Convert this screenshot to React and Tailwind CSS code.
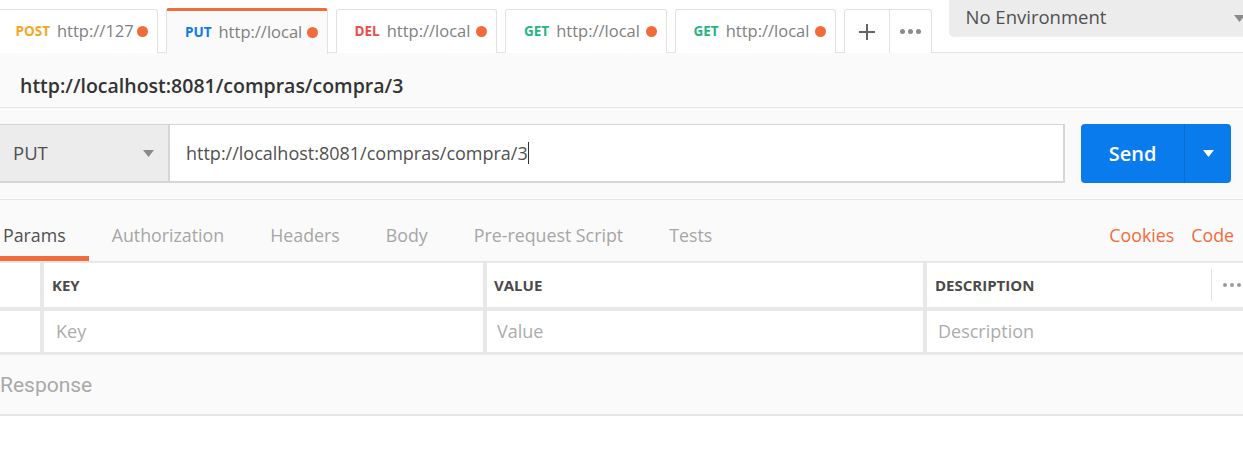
import React from 'react';

const tabs = [
  { method: 'POST', color: 'text-[#f5a623]', url: 'http://127' },
  { method: 'PUT', color: 'text-[#097bed]', url: 'http://local', active: true },
  { method: 'DEL', color: 'text-[#ed4b48]', url: 'http://local' },
  { method: 'GET', color: 'text-[#26b47f]', url: 'http://local' },
  { method: 'GET', color: 'text-[#26b47f]', url: 'http://local' },
];

const Caret = ({ className }) => (
  <svg width="11" height="7" viewBox="0 0 11 7" className={className}>
    <path d="M0 0 L11 0 L5.5 7 Z" fill="currentColor" />
  </svg>
);

const RequestTab = ({ tab }) => (
  <div
    className={
      'w-[161.5px] shrink-0 flex items-center pl-[18px] pr-[9px] border-x border-[#e2e2e2] rounded-t-[3px] ' +
      (tab.active
        ? 'h-[46px] bg-[#fafafa] border-t-[3px] border-t-[#f26b3a] relative top-px'
        : 'h-[44px] bg-white border-t')
    }
  >
    <span className={'text-[13.5px] font-bold shrink-0 ' + tab.color}>{tab.method}</span>
    <span className="ml-[7px] text-[16.5px] text-[#808080] whitespace-nowrap overflow-hidden flex-1">{tab.url}</span>
    <span className="w-[11px] h-[11px] rounded-full bg-[#f26b3a] shrink-0 ml-[3px]" />
  </div>
);

const App = () => {
  return (
    <div className="w-[1243px] h-[475px] overflow-hidden bg-white text-[#505050]" style={{ fontFamily: '"Open Sans", sans-serif' }}>
      {/* tab strip */}
      <div className="h-[53px] flex items-start bg-white border-b border-[#e4e4e4]">
        <div className="flex items-end gap-[8px] h-[53px] ml-[-3.5px]">
          {tabs.map((t, i) => (
            <RequestTab key={i} tab={t} />
          ))}
          <div className="w-[88px] h-[44px] flex border-x border-t border-[#e2e2e2] rounded-t-[3px] bg-white">
            <div className="w-[45px] flex items-center justify-center border-r border-[#e2e2e2] text-[#666]">
              <svg width="18" height="18" viewBox="0 0 18 18">
                <path d="M9 1 V17 M1 9 H17" stroke="currentColor" strokeWidth="2" />
              </svg>
            </div>
            <div className="flex-1 flex items-center justify-center gap-[3px]">
              <span className="w-[5px] h-[5px] rounded-full bg-[#8a8a8a]" />
              <span className="w-[5px] h-[5px] rounded-full bg-[#8a8a8a]" />
              <span className="w-[5px] h-[5px] rounded-full bg-[#8a8a8a]" />
            </div>
          </div>
        </div>
        <div className="ml-[16.5px] w-[310px] h-[37px] bg-[#ececec] rounded-bl-[5px] flex items-center pl-[17px] pb-[4px] shrink-0">
          <span className="text-[18.5px] text-[#505050]">No Environment</span>
          <Caret className="ml-[128px] mt-[4px] text-[#8a8a8a]" />
        </div>
      </div>

      <div className="bg-[#fafafa]">
        {/* title */}
        <div className="h-[55px] pl-[20px] pt-[21px] border-b border-[#e6e6e6]">
          <div className="text-[19.5px] leading-[24px] font-semibold text-[#333]">http://localhost:8081/compras/compra/3</div>
        </div>

        {/* url row */}
        <div className="flex pt-[16px] pb-[16px] border-b border-[#e6e6e6]">
          <div className="w-[170px] h-[59px] bg-[#ececec] border-t border-b-2 border-r-2 border-[#d6d6d6] flex items-center pl-[13px] pr-[14px] justify-between">
            <span className="text-[18.5px] text-[#505050]">PUT</span>
            <Caret className="text-[#8a8a8a]" />
          </div>
          <div className="w-[895px] h-[59px] bg-white border-t border-b-2 border-r-2 border-[#d6d6d6] flex items-center pl-[16px]">
            <span className="text-[18px] text-[#505050]">http://localhost:8081/compras/compra/3</span>
            <span className="w-px h-[22px] bg-[#333]" />
          </div>
          <div className="ml-[16px] w-[150px] h-[59px] bg-[#097bed] rounded-[4px] flex text-white">
            <div className="w-[104px] flex items-center justify-center border-r border-[#0a6cd2]">
              <span className="text-[20px] font-semibold">Send</span>
            </div>
            <div className="flex-1 flex items-center justify-center">
              <Caret />
            </div>
          </div>
        </div>

        {/* request tabs */}
        <div className="h-[61px] flex items-stretch ml-[-20px]">
          {['Params', 'Authorization', 'Headers', 'Body', 'Pre-request Script', 'Tests'].map((l, i) => (
            <div key={l} className="relative px-[23px] pt-[10px] flex items-center">
              <span className={'text-[17.8px] ' + (i === 0 ? 'text-[#505050]' : 'text-[#a6a6a6]')}>{l}</span>
              {i === 0 && <span className="absolute left-0 right-0 bottom-0 h-[5px] bg-[#f26b3a]" />}
            </div>
          ))}
          <div className="flex-1" />
          <div className="flex items-center pt-[10px] gap-[17px] pr-[9px] text-[17.8px] text-[#f26b3a]">
            <span>Cookies</span>
            <span>Code</span>
          </div>
        </div>

        {/* params table */}
        <div className="bg-[#e8e8e8] pt-[2px] pb-[3px] flex flex-col gap-[4px]">
          <div className="h-[44px] flex gap-[4px]">
            <div className="w-[40px] bg-white shrink-0" />
            <div className="w-[439px] bg-white shrink-0 flex items-center pl-[8px] text-[15px] font-bold text-[#4a4a4a]">KEY</div>
            <div className="w-[436px] bg-white shrink-0 flex items-center pl-[7px] text-[15px] font-bold text-[#4a4a4a]">VALUE</div>
            <div className="flex-1 bg-white flex items-center pl-[8px] text-[15px] font-bold text-[#4a4a4a]">
              <span className="w-[276px]">DESCRIPTION</span>
              <span className="w-px h-[32px] bg-[#e2e2e2]" />
              <span className="ml-[11px] flex gap-[3px]">
                <span className="w-[4px] h-[4px] rounded-full bg-[#9a9a9a]" />
                <span className="w-[4px] h-[4px] rounded-full bg-[#9a9a9a]" />
                <span className="w-[4px] h-[4px] rounded-full bg-[#9a9a9a]" />
              </span>
            </div>
          </div>
          <div className="h-[41px] flex gap-[4px]">
            <div className="w-[40px] bg-white shrink-0" />
            <div className="w-[439px] bg-white shrink-0 flex items-center pl-[12px] text-[18px] text-[#acacac]">Key</div>
            <div className="w-[436px] bg-white shrink-0 flex items-center pl-[10px] text-[18px] text-[#acacac]">Value</div>
            <div className="flex-1 bg-white flex items-center pl-[11px] text-[18px] text-[#acacac]">Description</div>
          </div>
        </div>

        {/* response */}
        <div className="h-[61px] flex items-center pt-[2px] border-b-2 border-[#e6e6e6]">
          <span className="text-[21px] text-[#a9a9a9]" style={{ fontFamily: 'Roboto, sans-serif' }}>Response</span>
        </div>
      </div>
    </div>
  );
};

export default App;
